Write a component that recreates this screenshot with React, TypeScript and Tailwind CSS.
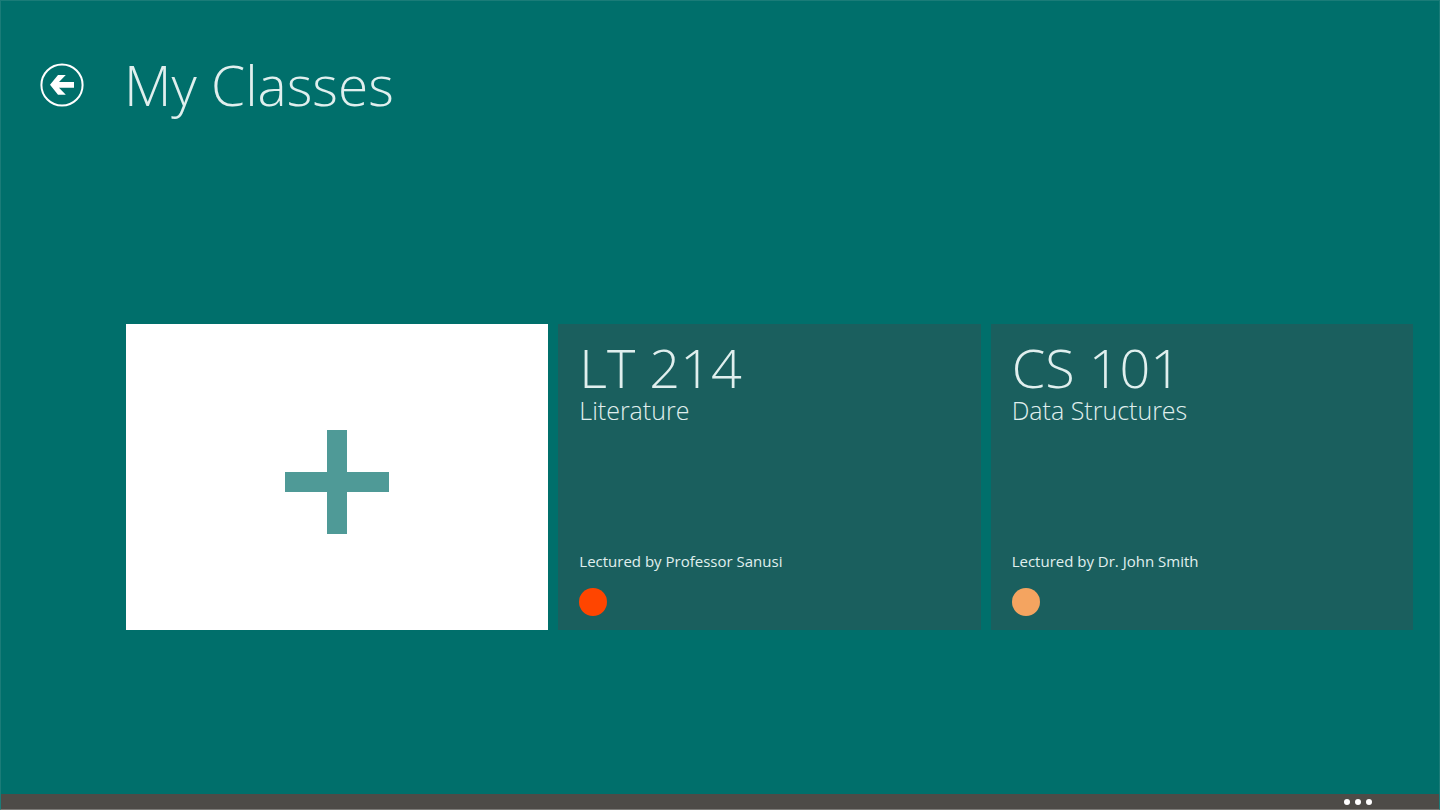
type Course = {
  code: string;
  name: string;
  lecturer: string;
  dot: string;
};

const courses: Course[] = [
  { code: "LT 214", name: "Literature", lecturer: "Professor Sanusi", dot: "bg-[#ff4500]" },
  { code: "CS 101", name: "Data Structures", lecturer: "Dr. John Smith", dot: "bg-[#f4a460]" },
];

function BackIcon() {
  return (
    <svg viewBox="0 0 44 44" className="size-11" aria-hidden="true">
      <circle cx="22" cy="22" r="20.6" fill="none" stroke="currentColor" strokeWidth="2" />
      <path
        d="M10 21.8 18 12h7.8L19 19.1h15v5.6H19l6.8 7H18z"
        fill="currentColor"
      />
    </svg>
  );
}

function PlusIcon() {
  return (
    <svg viewBox="0 0 104 104" className="size-26" aria-hidden="true">
      <path d="M42 0h20v42h42v20H62v42H42V62H0V42h42z" fill="#4f9a97" />
    </svg>
  );
}

function CourseTile({ course }: { course: Course }) {
  return (
    <a href="#" className="flex flex-col justify-between bg-[#1a5f5e] px-[21px] pt-3.5 pb-3.5">
      <div>
        <h2 className="text-[54px] leading-[58px] font-light">{course.code}</h2>
        <p className="text-[25px] leading-7 font-light">{course.name}</p>
      </div>
      <div>
        <p className="text-[15px] leading-5">Lectured by {course.lecturer}</p>
        <div className={`mt-[17px] size-7 rounded-full ${course.dot}`} />
      </div>
    </a>
  );
}

export default function App() {
  return (
    <div className="flex min-h-screen flex-col border border-[#1a7c78] border-b-[#7c7b77] bg-[#006f6b] font-['Open_Sans',sans-serif] text-[#e0efee]">
      <header className="flex items-center gap-10 px-[39px] pt-11">
        <button type="button" aria-label="Back" className="text-white">
          <BackIcon />
        </button>
        <h1 className="text-[55px] leading-20 font-light">My Classes</h1>
      </header>

      <main className="grid flex-1 auto-rows-[306px] grid-cols-3 content-start gap-[10px] pt-[199px] pr-[26px] pb-10 pl-[125px]">
        <button
          type="button"
          aria-label="Add class"
          className="flex items-center justify-center bg-white pt-2.5"
        >
          <PlusIcon />
        </button>
        {courses.map((course) => (
          <CourseTile key={course.code} course={course} />
        ))}
      </main>

      <footer className="flex h-[15px] items-center justify-end bg-[#4d4b47] pr-[67px]">
        <button type="button" aria-label="More options" className="flex gap-[5px]">
          <span className="size-1.5 rounded-full bg-white" />
          <span className="size-1.5 rounded-full bg-white" />
          <span className="size-1.5 rounded-full bg-white" />
        </button>
      </footer>
    </div>
  );
}
